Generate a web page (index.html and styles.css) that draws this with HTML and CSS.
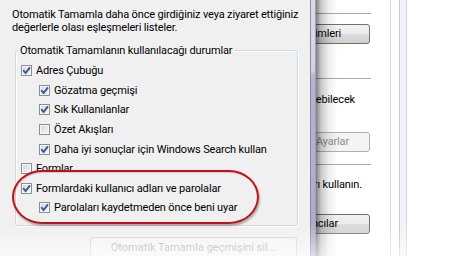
FILE: index.html
```html
<!DOCTYPE html>
<html lang="tr">
<head>
    <meta charset="UTF-8">
    <meta name="viewport" content="width=device-width, initial-scale=1.0">
    <title>Otomatik Tamamla Ayarları</title>
    <link rel="stylesheet" href="styles.css">
</head>
<body>
    <div class="screen">
        <!-- Önde duran iletişim kutusu -->
        <div class="front">
            <p class="intro">Otomatik Tamamla daha önce girdiğiniz veya ziyaret ettiğiniz<br>değerlerle olası eşleşmeleri listeler.</p>

            <fieldset class="group">
                <legend>Otomatik Tamamlanın kullanılacağı durumlar</legend>
                <div class="row"><span class="box on"><svg viewBox="0 0 11 11"><path d="M2.2 5.2 L4.6 8 L9 2.4"/></svg></span>Adres Çubuğu</div>
                <div class="row sub"><span class="box on"><svg viewBox="0 0 11 11"><path d="M2.2 5.2 L4.6 8 L9 2.4"/></svg></span>Gözatma geçmişi</div>
                <div class="row sub"><span class="box on"><svg viewBox="0 0 11 11"><path d="M2.2 5.2 L4.6 8 L9 2.4"/></svg></span>Sık Kullanılanlar</div>
                <div class="row sub"><span class="box"></span>Özet Akışları</div>
                <div class="row sub"><span class="box on"><svg viewBox="0 0 11 11"><path d="M2.2 5.2 L4.6 8 L9 2.4"/></svg></span>Daha iyi sonuçlar için Windows Search kullan</div>
                <div class="row"><span class="box"></span>Formlar</div>
                <div class="row"><span class="box on"><svg viewBox="0 0 11 11"><path d="M2.2 5.2 L4.6 8 L9 2.4"/></svg></span>Formlardaki kullanıcı adları ve parolalar</div>
                <div class="row sub"><span class="box on"><svg viewBox="0 0 11 11"><path d="M2.2 5.2 L4.6 8 L9 2.4"/></svg></span>Parolaları kaydetmeden önce beni uyar</div>
            </fieldset>

            <div class="actions">
                <button class="btn" disabled>Otomatik Tamamla geçmişini sil...</button>
            </div>
        </div>

        <div class="frame"></div>

        <!-- Arkadaki İnternet Seçenekleri penceresi -->
        <div class="behind">
            <div class="behind-col">
                <div class="rule first"></div>
                <div class="line btn-line b1"><span class="btn back">Ebeveyn Denetimleri</span></div>
                <div class="rule r2"></div>
                <div class="line t1"><span>sakladığınız bilgileri önerebilecek</span></div>
                <div class="line btn-line b2"><span class="btn back off">Ayarlar</span></div>
                <div class="rule r3"></div>
                <div class="line t2"><span>için sertifikaları kullanın.</span></div>
                <div class="line btn-line b3"><span class="btn back">Yayıncılar</span></div>
            </div>
            <div class="tab-edge"></div>
            <div class="win-edge"></div>
        </div>

        <div class="shadow"></div>
        <div class="ring"></div>
        <div class="fade"></div>
    </div>
</body>
</html>
```

FILE: styles.css
```css
body {
    margin: 0;
    background-color: #fff;
    font-family: Roboto, "Noto Sans", sans-serif;
    font-size: 11px;
    line-height: 13px;
    letter-spacing: -0.15px;
    color: #000;
}
.screen {
    position: relative;
    display: flex;
    width: 452px;
    height: 256px;
    overflow: hidden;
}
.front {
    width: 310px;
    flex-shrink: 0;
    background-color: #f0f0f0;
    padding: 8px 12px 0 12px;
    box-sizing: border-box;
}
.intro {
    margin: 0;
    white-space: nowrap;
}
.group {
    margin: 10px 0 0 3px;
    padding: 4px 0 7px 0;
    border: 1px solid #d3d9de;
    border-radius: 3px;
    box-shadow: inset 1px 1px 0 #fff, 1px 1px 0 #fff;
}
.group legend {
    margin-left: 2px;
    padding: 0 2px;
    line-height: 13px;
}
.row {
    display: flex;
    align-items: center;
    height: 19.6px;
    gap: 4px;
    padding-left: 5px;
    white-space: nowrap;
}
.row.sub {
    padding-left: 23px;
}
.box {
    width: 11px;
    height: 11px;
    box-sizing: border-box;
    border: 1px solid #8e8f8f;
    background: linear-gradient(135deg, #d3d6dc, #f8f8f9);
    box-shadow: inset 0 0 0 1px #f6f6f6;
    position: relative;
    flex-shrink: 0;
}
.box svg {
    position: absolute;
    left: -1px;
    top: -1px;
    width: 11px;
    height: 11px;
}
.box path {
    fill: none;
    stroke: #3a5494;
    stroke-width: 1.9;
}
.actions {
    margin-top: 11px;
    padding-left: 78px;
}
.btn {
    font: inherit;
    width: 207px;
    height: 22px;
    border: 1px solid #cfd2d5;
    border-radius: 3px;
    background: #f4f4f4;
    color: #ababab;
    padding: 0;
}

/* pencere kenarı */
.frame {
    width: 6px;
    flex-shrink: 0;
    box-sizing: border-box;
    border-left: 1px solid #8b8a98;
    border-right: 1px solid #a09eb4;
    background: linear-gradient(to bottom, #dedbe8 0, #d6d2e4 70px, #b8b1d1 76px, #b0a9cc 100%);
}
.behind {
    flex: 1;
    display: flex;
    background-color: #fff;
}
.behind-col {
    width: 55px;
    flex-shrink: 0;
    display: flex;
    flex-direction: column;
    overflow: hidden;
}
.rule {
    height: 1px;
    background-color: #a8a8a8;
    flex-shrink: 0;
}
.rule.first { margin-top: 13px; }
.rule.r2 { margin-top: 34px; }
.rule.r3 { margin-top: 12px; }
.line {
    display: flex;
    justify-content: flex-end;
    white-space: nowrap;
    flex-shrink: 0;
}
.t1 { margin-top: 13.5px; padding-right: 16px; }
.t2 { margin-top: 12.5px; padding-right: 9px; }
.btn-line { padding-right: 1px; }
.b1 { margin-top: 10px; }
.b2 { margin-top: 26.5px; }
.b3 { margin-top: 23.5px; }
.btn.back {
    display: block;
    width: auto;
    height: 20px;
    line-height: 18px;
    box-sizing: border-box;
    border: 1px solid #707070;
    background: linear-gradient(to bottom, #f2f2f2 0, #ebebeb 50%, #dddddd 51%, #cfcfcf 100%);
    color: #000;
}
.b1 .btn { padding: 0 28px 0 20px; }
.b2 .btn { padding: 0 20px 0 20px; }
.b3 .btn { padding: 0 31px 0 20px; }
.btn.back.off {
    border-color: #adb2b5;
    background: #f4f4f4;
    color: #8d8d8d;
}
.tab-edge {
    width: 1px;
    margin-left: 19px;
    background-color: #d9d9d9;
}
.win-edge {
    width: 8px;
    margin-left: 8px;
    box-sizing: border-box;
    border-left: 1px solid #c6c5d2;
    border-right: 1px solid #d6d5e0;
    background-color: #f3f3f7;
}

/* üstte duran katmanlar */
.shadow {
    position: absolute;
    left: 316px;
    top: 0;
    width: 22px;
    height: 256px;
    background: linear-gradient(to right, rgba(0, 0, 0, 0.5) 0, rgba(0, 0, 0, 0.22) 5px, rgba(0, 0, 0, 0.06) 13px, rgba(0, 0, 0, 0) 100%);
}
.ring {
    position: absolute;
    left: 12px;
    top: 170px;
    width: 247px;
    height: 54px;
    box-sizing: border-box;
    border: 2.5px solid #be111b;
    border-radius: 30px / 27px;
    box-shadow: 1px 2px 2px rgba(0, 0, 0, 0.3), inset 1px 1px 1px rgba(0, 0, 0, 0.15);
}
.fade {
    position: absolute;
    left: 0;
    top: 0;
    width: 452px;
    height: 256px;
    background: linear-gradient(to bottom, rgba(255, 255, 255, 0) 225px, rgba(255, 255, 255, 0.6) 256px);
    pointer-events: none;
}
```
